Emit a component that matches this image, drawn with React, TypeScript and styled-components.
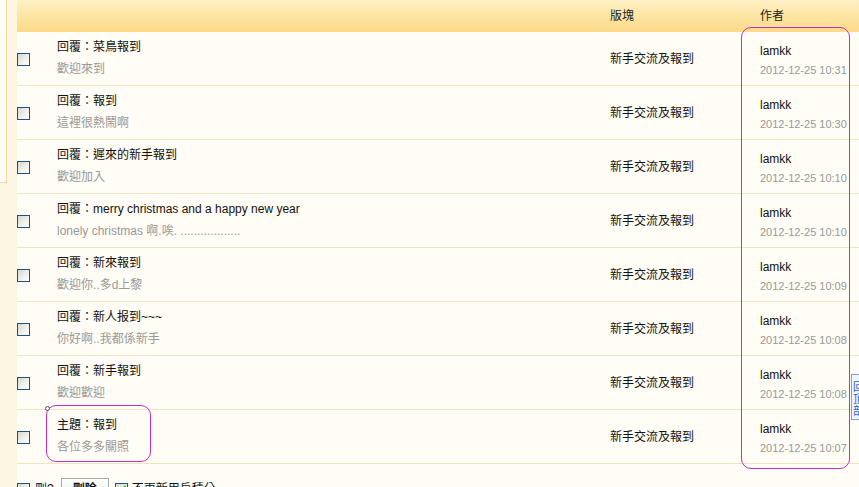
import React from "react";
import styled, { createGlobalStyle } from "styled-components";

const Global = createGlobalStyle`
  html, body { margin: 0; padding: 0; background: #fffdf5; overflow: hidden; }
  body { font-family: "Liberation Sans", "Noto Sans CJK TC", sans-serif; font-size: 12px; color: #000; }
`;

const Page = styled.div`
  position: relative;
  display: flex;
  width: 859px;
  height: 487px;
  overflow: hidden;
  background: #fffdf5;
`;

const Sidebar = styled.div`
  width: 17px;
  flex: none;
  background: #fdf6e2;
`;

const SidePanel = styled.div`
  width: 6px;
  height: 182px;
  background: #fffdf7;
  border-right: 1px solid #ecd9a0;
  border-bottom: 1px solid #ecd9a0;
`;

const Main = styled.div`
  flex: 1;
  display: flex;
  flex-direction: column;
  min-height: 0;
`;

const cols = "40px 553px 150px 1fr";

const Header = styled.div`
  flex: none;
  display: grid;
  grid-template-columns: ${cols};
  height: 32px;
  align-items: center;
  padding-bottom: 4px;
  box-sizing: border-box;
  background: linear-gradient(#fef0c6 0%, #fde6a6 45%, #fcda88 100%);
  color: #222;
`;

const Row = styled.div`
  flex: none;
  display: grid;
  grid-template-columns: ${cols};
  height: 54px;
  box-sizing: border-box;
  border-bottom: 1px solid #f2e5bb;
  align-items: center;
`;

const Check = styled.span<{ $checked?: boolean }>`
  display: inline-block;
  vertical-align: middle;
  width: 11px;
  height: 11px;
  border: 1px solid #1c5180;
  background: linear-gradient(135deg, #d8d8d2 0%, #f2f2ee 60%, #ffffff 100%);
  position: relative;
  flex: none;
  &::after {
    content: ${(p) => (p.$checked ? '""' : "none")};
    position: absolute;
    left: 3px;
    top: 0px;
    width: 3px;
    height: 7px;
    border: solid #21a121;
    border-width: 0 2px 2px 0;
    transform: rotate(40deg);
  }
`;

const CheckCell = styled.div`
  display: flex;
  align-items: center;
  padding-top: 2px;
`;

const TitleCell = styled.div`
  align-self: start;
  padding-top: 6px;
  display: flex;
  flex-direction: column;
`;

const Title = styled.div`
  line-height: 18px;
  color: #111;
  white-space: nowrap;
`;

const Sub = styled.div`
  margin-top: 4px;
  line-height: 18px;
  color: #999;
  white-space: nowrap;
`;

const Forum = styled.div`
  color: #111;
  line-height: 18px;
`;

const AuthorCell = styled.div`
  align-self: start;
  padding-top: 10px;
  display: flex;
  flex-direction: column;
`;

const Author = styled.div`
  line-height: 18px;
  color: #111;
`;

const DateText = styled.div`
  margin-top: 1px;
  line-height: 18px;
  font-size: 11px;
  color: #999;
  white-space: nowrap;
`;

const Footer = styled.div`
  flex: none;
  display: flex;
  align-items: center;
  padding-top: 14px;
  height: 22px;
  line-height: 18px;
`;

const FooterLabel = styled.span<{ $ml: number }>`
  margin-left: ${(p) => p.$ml}px;
  color: #111;
  white-space: nowrap;
`;

const Button = styled.span`
  margin-left: 7px;
  margin-right: 6px;
  width: 48px;
  height: 22px;
  box-sizing: border-box;
  border: 1px solid #a8a8a8;
  background: linear-gradient(#ffffff, #ecebe6);
  font-weight: bold;
  text-align: center;
  line-height: 20px;
  color: #111;
`;

const Mark = styled.div<{ $r: number }>`
  position: absolute;
  border: 1px solid #c22fc2;
  border-radius: ${(p) => p.$r}px;
  pointer-events: none;
`;

const Dot = styled.div`
  position: absolute;
  left: 45px;
  top: 406px;
  width: 3px;
  height: 3px;
  border: 1px solid #555;
  border-radius: 50%;
  background: #fff;
`;

const BackTop = styled.div`
  position: absolute;
  left: 851px;
  top: 374px;
  width: 18px;
  height: 46px;
  box-sizing: border-box;
  border: 1px solid #7ea3d6;
  background: #eef4fc;
  color: #2f62b5;
  font-size: 11px;
  line-height: 12px;
  padding: 6px 0 0 1px;
  display: flex;
  flex-direction: column;
`;

type Post = { title: string; sub: string; date: string };

const posts: Post[] = [
  { title: "回覆：菜鳥報到", sub: "歡迎來到", date: "2012-12-25 10:31" },
  { title: "回覆：報到", sub: "這裡很熱鬧啊", date: "2012-12-25 10:30" },
  { title: "回覆：遲來的新手報到", sub: "歡迎加入", date: "2012-12-25 10:10" },
  { title: "回覆：merry christmas and a happy new year", sub: "lonely christmas 啊.唉. ..................", date: "2012-12-25 10:10" },
  { title: "回覆：新來報到", sub: "歡迎你..多d上黎", date: "2012-12-25 10:09" },
  { title: "回覆：新人报到~~~", sub: "你好啊..我都係新手", date: "2012-12-25 10:08" },
  { title: "回覆：新手報到", sub: "歡迎歡迎", date: "2012-12-25 10:08" },
  { title: "主題：報到", sub: "各位多多關照", date: "2012-12-25 10:07" },
];

export default function App() {
  return (
    <Page>
      <Global />
      <Sidebar>
        <SidePanel />
      </Sidebar>
      <Main>
        <Header>
          <span />
          <span />
          <span>版塊</span>
          <span>作者</span>
        </Header>
        {posts.map((p, i) => (
          <Row key={i}>
            <CheckCell><Check /></CheckCell>
            <TitleCell>
              <Title>{p.title}</Title>
              <Sub>{p.sub}</Sub>
            </TitleCell>
            <Forum>新手交流及報到</Forum>
            <AuthorCell>
              <Author>lamkk</Author>
              <DateText>{p.date}</DateText>
            </AuthorCell>
          </Row>
        ))}
        <Footer>
          <Check />
          <FooterLabel $ml={5}>刪?</FooterLabel>
          <Button>刪除</Button>
          <Check $checked />
          <FooterLabel $ml={4}>不更新用戶積分</FooterLabel>
        </Footer>
      </Main>
      <Mark $r={10} style={{ left: 741, top: 27, width: 107, height: 440 }} />
      <Mark $r={10} style={{ left: 46, top: 405, width: 103, height: 55 }} />
      <Dot />
      <BackTop>
        <span>回</span>
        <span>頂</span>
        <span>部</span>
      </BackTop>
    </Page>
  );
}
